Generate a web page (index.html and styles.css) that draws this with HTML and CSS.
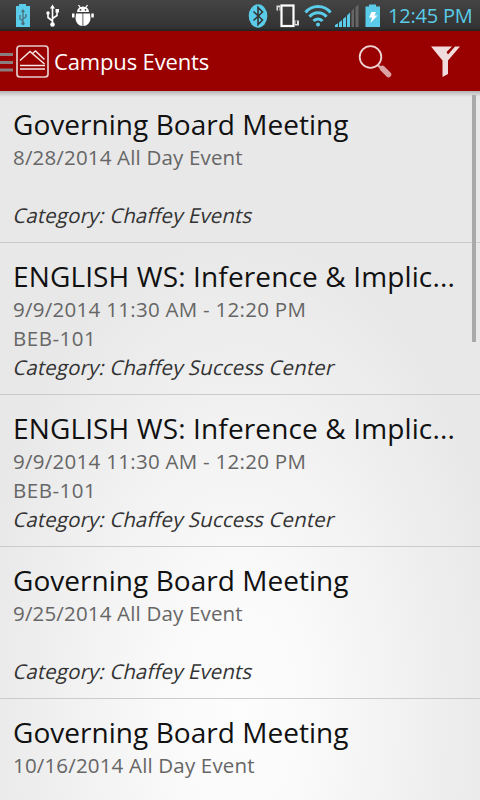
FILE: index.html
```html
<!DOCTYPE html>
<html lang="en">
<head>
	<meta charset="utf-8">
	<meta name="viewport" content="width=device-width, initial-scale=1.0">
	<title>Campus Events</title>
	<link rel="stylesheet" href="styles.css">
</head>
<body>
	<div class="statusbar">
		<svg class="status-icons" width="110" height="31" viewBox="0 0 110 31">
			<!-- usb battery -->
			<path d="M16 6h3V4h7v2h4v21H16z" fill="#5acbe8"/>
			<g fill="none" stroke="#4a6f7a" stroke-width="1.3">
				<path d="M23 11v12M23 21l-3-2v-4M23 19l3-2v-3"/>
			</g>
			<path d="M21 12l2-3 2 3z" fill="#4a6f7a"/>
			<circle cx="23" cy="23.500" r="1.700" fill="#4a6f7a"/>
			<!-- usb -->
			<g fill="none" stroke="#fff" stroke-width="1.600">
				<path d="M52.500 7v17M52.500 21l-4.500-3.500V13M52.500 18.500l4.500-3V11"/>
			</g>
			<path d="M50 8.500l2.500-4 2.500 4z" fill="#fff"/>
			<circle cx="52.500" cy="24.500" r="2.300" fill="#fff"/>
			<circle cx="48" cy="13" r="1.700" fill="#fff"/>
			<rect x="55.500" y="9" width="3.500" height="3.500" fill="#fff"/>
			<!-- debug bug -->
			<path d="M78.500 5l2 3M87.500 5l-2 3" stroke="#fff" stroke-width="1.300"/>
			<path d="M77 12a6 5.500 0 0 1 12 0z" fill="#fff"/>
			<path d="M76 13.500h6.500v12.500a7.500 7.500 0 0 1-7-7.500zM83.300 13.500H90l.5 5a7.500 7.500 0 0 1-7.200 7.500z" fill="#fff"/>
			<path d="M72 13.500h2.500v4H72zM91.300 13.500h2.500v4h-2.500z" fill="#fff"/>
			<circle cx="80.500" cy="9.800" r=".9" fill="#333"/>
			<circle cx="85.500" cy="9.800" r=".9" fill="#333"/>
		</svg>
		<div class="status-right">
			<svg width="135" height="31" viewBox="248 0 135 31">
				<!-- bluetooth -->
				<ellipse cx="258" cy="16" rx="9.300" ry="11.700" fill="#5acbe8"/>
				<path d="M253.500 11.500l9 8.500-4.500 4.500v-17l4.500 4.500-9 8.500" fill="none" stroke="#363636" stroke-width="1.600"/>
				<!-- vibrate -->
				<rect x="281.500" y="5.500" width="12" height="20.500" fill="none" stroke="#fff" stroke-width="2.200"/>
				<path d="M276.500 5.500h4v5h-4zM294.500 20.500h4.500v5h-4.500z" fill="#ddd"/>
				<path d="M278 7.200h1.500v3.500H278zM295.500 20.500h1.500v3.500h-1.500z" fill="#444"/>
				<!-- wifi -->
				<g fill="none" stroke="#5acbe8" stroke-width="3">
					<path d="M305.500 12.500a16 16 0 0 1 25 0"/>
					<path d="M309.500 16.800a11 11 0 0 1 17 0"/>
					<path d="M313.500 21a6 6 0 0 1 9 0"/>
				</g>
				<circle cx="318" cy="24.500" r="2" fill="#5acbe8"/>
				<!-- signal -->
				<path d="M335 27v-2l3-1.700V27zM339 27v-4.500l3-2.500v7zM343 27v-8l3-2.500V27zM347 27V15.500l3-3V27z" fill="#5acbe8"/>
				<path d="M351.500 27V11l2.500-2.500V27zM355.500 27V7l3-2.500V27z" fill="#666"/>
				<!-- battery -->
				<path d="M365.500 6.500h3.500v-2h7v2h4V27h-14.500z" fill="#5acbe8"/>
				<path d="M371.500 12h4.500l-1.500 3.500h3l-7 7.500 1.500-5.500h-3z" fill="#fff"/>
			</svg>
			<span class="clock">12:45 PM</span>
		</div>
	</div>

	<header class="actionbar">
		<svg class="logo" width="49" height="60" viewBox="0 31 49 60">
			<path d="M0 54.500h13M0 62.500h13M0 70h13" stroke="#8b7d7d" stroke-width="3"/>
			<rect x="17" y="46" width="31" height="31" rx="3" fill="#900" stroke="#e6cccc" stroke-width="1.700"/>
			<path d="M20 60.500l10-9 14.500 12.500M33 53l2.500-2 9 8.500" fill="none" stroke="#f5e6e6" stroke-width="1.500"/>
			<path d="M20 65.500h25M20 69h25" fill="none" stroke="#f5e6e6" stroke-width="1.500"/>
		</svg>
		<h1 class="title">Campus Events</h1>
		<svg class="actions" width="105" height="60" viewBox="355 31 105 60">
			<path d="M378 65.500l4 3" stroke="#dba3a3" stroke-width="2.500"/>
			<circle cx="370.500" cy="57" r="10.800" fill="none" stroke="#efd5d5" stroke-width="1.800"/>
			<path d="M382.500 68.500l6 6" stroke="#dba3a3" stroke-width="5.500" stroke-linecap="round"/>
			<path d="M431 46.500h21l-5.500 5.500 1.500 2.500 7-8h5L448 60.500V74l-5.500 3V60.500z" fill="#f0dcdc"/>
		</svg>
	</header>

	<main class="list">
		<div class="event">
			<h2 class="name">Governing Board Meeting</h2>
			<p class="info">8/28/2014 All Day Event</p>
			<p class="info"></p>
			<p class="category">Category: Chaffey Events</p>
		</div>
		<div class="event">
			<h2 class="name english">ENGLISH WS: Inference &amp; Implic...</h2>
			<p class="info time">9/9/2014 11:30 AM - 12:20 PM</p>
			<p class="info room">BEB-101</p>
			<p class="category">Category: Chaffey Success Center</p>
		</div>
		<div class="event">
			<h2 class="name english">ENGLISH WS: Inference &amp; Implic...</h2>
			<p class="info time">9/9/2014 11:30 AM - 12:20 PM</p>
			<p class="info room">BEB-101</p>
			<p class="category">Category: Chaffey Success Center</p>
		</div>
		<div class="event">
			<h2 class="name">Governing Board Meeting</h2>
			<p class="info">9/25/2014 All Day Event</p>
			<p class="info"></p>
			<p class="category">Category: Chaffey Events</p>
		</div>
		<div class="event">
			<h2 class="name">Governing Board Meeting</h2>
			<p class="info">10/16/2014 All Day Event</p>
		</div>
		<div class="scrollbar"></div>
	</main>
</body>
</html>
```
FILE: styles.css
```css
* {
    box-sizing: border-box;
}
body {
    margin: 0;
    height: 800px;
    overflow: hidden;
    display: flex;
    flex-direction: column;
    font-family: "Open Sans", "Noto Sans", sans-serif;
}
h1, h2, p {
    margin: 0;
    font-weight: normal;
}
svg {
    display: block;
}

.statusbar {
    display: flex;
    justify-content: space-between;
    flex: none;
    height: 31px;
    background: linear-gradient(#444, #333 28px, #222);
}
.status-right {
    display: flex;
    align-items: center;
    padding-right: 8px;
}
.clock {
    width: 84px;
    margin-left: 5px;
    font-size: 20px;
    line-height: 31px;
    letter-spacing: -0.2px;
    color: #5acbe8;
    white-space: nowrap;
}

.actionbar {
    display: flex;
    align-items: center;
    flex: none;
    height: 60px;
    background: #990000;
}
.title {
    flex: 1;
    padding-left: 5px;
    font-size: 22px;
    line-height: 60px;
    letter-spacing: -0.15px;
    color: #fff;
}
.actions {
    margin-right: 20px;
}

.list {
    position: relative;
    flex: 1;
    overflow: hidden;
    background:
        linear-gradient(rgba(0, 0, 0, 0.22), rgba(0, 0, 0, 0) 6px),
        radial-gradient(270px 480px at 240px 620px, #fdfdfd, #f9f9f9 30%, #e8e8e8);
}
.event {
    height: 152px;
    padding: 15px 13px 0;
    border-bottom: 1px solid #cbcbcb;
    white-space: nowrap;
}
.name {
    height: 37px;
    font-size: 28px;
    line-height: 36px;
    letter-spacing: 0.04px;
    color: #111;
}
.english {
    letter-spacing: 0.13px;
}
.info {
    height: 28.5px;
    font-size: 20.5px;
    line-height: 28.5px;
    letter-spacing: 0.17px;
    color: #666;
}
.time {
    letter-spacing: 0.28px;
}
.room {
    letter-spacing: 0.5px;
}
/* slanted regular face, the real italic is too narrow */
.category {
    margin-top: 1px;
    padding-left: 1px;
    font-size: 20.5px;
    line-height: 28.5px;
    letter-spacing: 0.1px;
    transform: skewX(-13deg);
    color: #333;
}
.scrollbar {
    position: absolute;
    top: 4px;
    right: 4px;
    width: 4px;
    height: 247px;
    background: #a9a9a9;
}
```
